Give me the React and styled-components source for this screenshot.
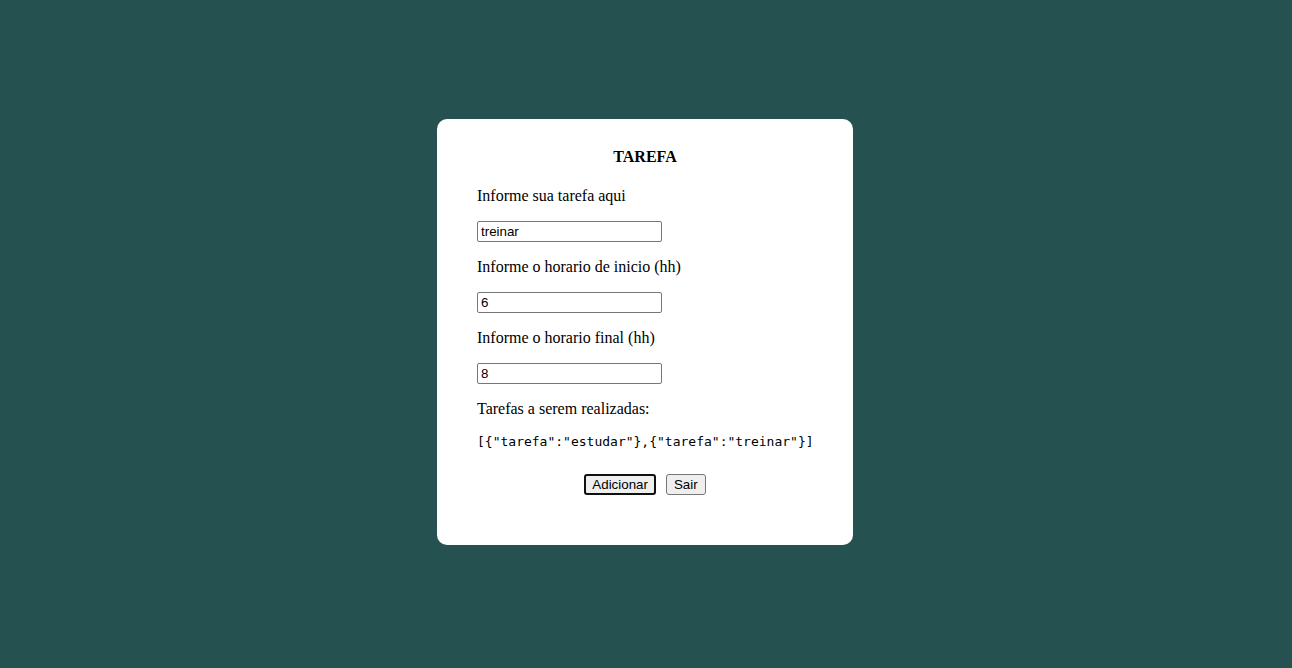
import styled, { createGlobalStyle } from "styled-components"

const GlobalStyle = createGlobalStyle`
  body {
    margin: 0;
    background: #255251;
    font-family: "Liberation Serif", "Times New Roman", serif;
  }
`

const Page = styled.div`
  min-height: 100vh;
  display: flex;
  align-items: center;
  justify-content: center;
  padding-bottom: 4px;
  box-sizing: border-box;
`

const Card = styled.div`
  width: 416px;
  height: 426px;
  box-sizing: border-box;
  margin-left: -2px;
  background: #fff;
  border-radius: 10px;
  padding: 29px 40px 0;
`

const Title = styled.h3`
  margin: 0 0 21px;
  text-align: center;
  font-size: 16px;
  line-height: 18px;
  font-weight: bold;
  color: #000;
`

const Label = styled.p`
  margin: 0 0 16px;
  font-size: 16px;
  line-height: 18px;
  color: #000;
`

const Field = styled.input`
  display: block;
  width: 185px;
  height: 21px;
  box-sizing: border-box;
  margin: 0 0 16px;
  padding: 1px 3px;
  border: 1px solid #767676;
  border-radius: 2px;
  font-family: "Liberation Sans", Arial, sans-serif;
  font-size: 13.33px;
  color: #000;
`

const Code = styled.pre`
  margin: 0 0 25px;
  font-family: "DejaVu Sans Mono", monospace;
  font-size: 13px;
  line-height: 15px;
  color: #000;
`

const Actions = styled.div`
  display: flex;
  justify-content: center;
  gap: 10px;
`

const Button = styled.button`
  height: 21px;
  box-sizing: border-box;
  padding: ${(p) => (p.$focused ? "0 6px" : "0 7px")};
  background: #efefef;
  border: ${(p) => (p.$focused ? "2px solid #101010" : "1px solid #767676")};
  border-radius: 3px;
  font-family: "Liberation Sans", Arial, sans-serif;
  font-size: 13.33px;
  color: #000;
`

const App = () => {
  return (
    <>
      <GlobalStyle />
      <Page>
        <Card>
          <Title>TAREFA</Title>
          <Label>Informe sua tarefa aqui</Label>
          <Field defaultValue="treinar" />
          <Label>Informe o horario de inicio (hh)</Label>
          <Field defaultValue="6" />
          <Label>Informe o horario final (hh)</Label>
          <Field defaultValue="8" />
          <Label>Tarefas a serem realizadas:</Label>
          <Code>[{`{"tarefa":"estudar"},{"tarefa":"treinar"}`}]</Code>
          <Actions>
            <Button $focused>Adicionar</Button>
            <Button>Sair</Button>
          </Actions>
        </Card>
      </Page>
    </>
  )
}

export default App
